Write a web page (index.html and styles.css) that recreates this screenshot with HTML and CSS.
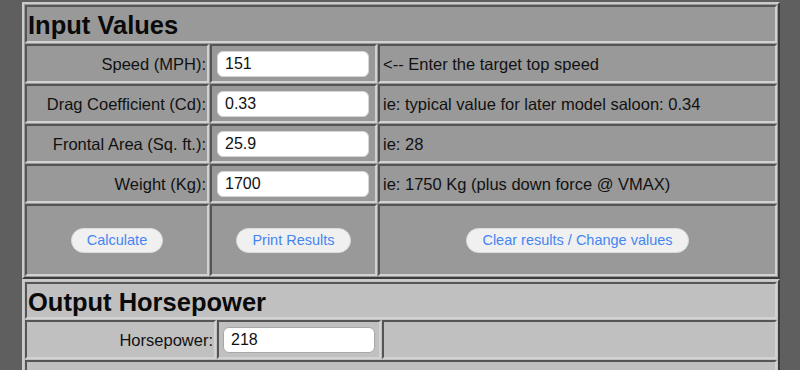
FILE: index.html
```html
<!DOCTYPE html>
<html>
<head>
<meta charset="utf-8">
<title>Horsepower Calculator</title>
<link rel="stylesheet" href="styles.css">
</head>
<body>
<table class="calc calc-input">
  <colgroup><col class="in-c1"><col class="in-c2"><col class="in-c3"></colgroup>
  <tr><th colspan="3" class="title">Input Values</th></tr>
  <tr>
    <td class="label">Speed (MPH):</td>
    <td class="field"><input class="box" type="text" value="151"></td>
    <td class="hint">&lt;-- Enter the target top speed</td>
  </tr>
  <tr>
    <td class="label">Drag Coefficient (Cd):</td>
    <td class="field"><input class="box" type="text" value="0.33"></td>
    <td class="hint">ie: typical value for later model saloon: 0.34</td>
  </tr>
  <tr>
    <td class="label">Frontal Area (Sq. ft.):</td>
    <td class="field"><input class="box" type="text" value="25.9"></td>
    <td class="hint">ie: 28</td>
  </tr>
  <tr>
    <td class="label">Weight (Kg):</td>
    <td class="field"><input class="box" type="text" value="1700"></td>
    <td class="hint">ie: 1750 Kg (plus down force @ VMAX)</td>
  </tr>
  <tr class="btn-row">
    <td class="btn-cell"><button class="btn" type="button">Calculate</button></td>
    <td class="btn-cell"><button class="btn" type="button">Print Results</button></td>
    <td class="btn-cell"><button class="btn" type="button">Clear results / Change values</button></td>
  </tr>
</table>
<table class="calc calc-output">
  <colgroup><col class="out-c1"><col class="out-c2"><col class="out-c3"></colgroup>
  <tr><th colspan="3" class="title">Output Horsepower</th></tr>
  <tr>
    <td class="label">Horsepower:</td>
    <td class="field field-out"><input class="box" type="text" value="218"></td>
    <td class="hint"></td>
  </tr>
  <tr class="more-row">
    <td colspan="3" class="hint"></td>
  </tr>
</table>
</body>
</html>
```

FILE: styles.css
```css
html {
  background: #5f5f5f;
}
body {
  margin: 2px 20px 0 22px;
  overflow: hidden;
  height: 368px;
  font-family: "Liberation Sans", Arial, Helvetica, sans-serif;
  color: #111;
}
.calc {
  table-layout: fixed;
  width: 758px;
  border-collapse: separate;
  border-spacing: 1px;
  border-style: solid;
  border-width: 2px;
  border-color: #cbcbcb #3c3c3c #3c3c3c #cbcbcb;
}
.calc-input {
  background: #999999;
}
.calc-output {
  background: #c0c0c0;
}
.in-c1 { width: 184px; }
.in-c2 { width: 167px; }
.in-c3 { width: 399px; }
.out-c1 { width: 191px; }
.out-c2 { width: 164px; }
.out-c3 { width: 395px; }

.calc th,
.calc td {
  box-sizing: border-box;
  border-style: solid;
  border-width: 2px;
  border-color: #555555 #d2d2d2 #d2d2d2 #555555;
}
.title {
  text-align: left;
  font-size: 25.5px;
  font-weight: bold;
  line-height: 30px;
  padding: 3px 1px 1px 1px;
  color: #0a0a0a;
}
.calc-output .title {
  line-height: 29px;
  padding: 4px 1px 0 1px;
}
.label {
  text-align: right;
  font-size: 16.5px;
  padding: 5px 1px 4px 1px;
  white-space: nowrap;
}
.field {
  padding: 5px 4px 4px 5px;
}
.field-out {
  padding-left: 4px;
}
.hint {
  font-size: 16.5px;
  padding: 5px 3px 4px 3px;
  white-space: nowrap;
}
.box {
  display: block;
  box-sizing: border-box;
  width: 152px;
  height: 26px;
  margin: 0;
  padding: 0 7px;
  border: 1px solid #d6d6d6;
  border-radius: 6px;
  background: #ffffff;
  font-family: "Liberation Sans", Arial, Helvetica, sans-serif;
  font-size: 16px;
  color: #111;
  outline: none;
}
.field-out .box {
  border-color: #a8a8a8;
}
.btn-cell {
  height: 72px;
  text-align: center;
  vertical-align: middle;
  padding: 0;
}
.btn {
  height: 25px;
  padding: 0 15px;
  border: 1px solid #dcdcdc;
  border-radius: 13px;
  background: #f0f0f0;
  color: #4585f2;
  font-family: "Liberation Sans", Arial, Helvetica, sans-serif;
  font-size: 14.5px;
  line-height: 23px;
}
.more-row td {
  height: 40px;
}
```
